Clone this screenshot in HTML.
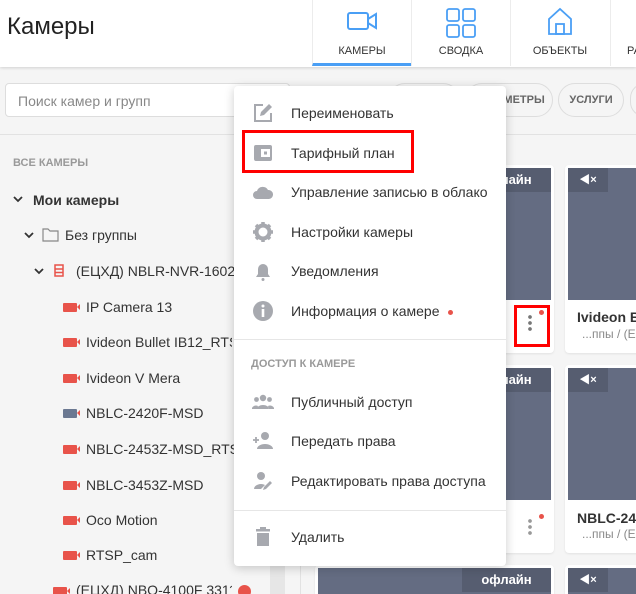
<!DOCTYPE html>
<html><head><meta charset="utf-8">
<style>
*{box-sizing:border-box;margin:0;padding:0}
html,body{width:636px;height:594px;overflow:hidden}
body{background:#f5f5f5;font-family:"Liberation Sans","Noto Sans CJK SC",sans-serif;position:relative;color:#333}
.abs{position:absolute}
.hdr{left:0;top:0;width:636px;height:67px;background:#fff;box-shadow:0 1px 3px rgba(0,0,0,.15)}
.tab{top:0;height:66px;width:99px;border-left:1px solid #ececec;text-align:center;font-size:11px;color:#333}
.tab span{position:absolute;left:0;right:0;top:45px}
.chip{top:83px;height:34px;border:1px solid #ddd;border-radius:17px;font-size:11px;font-weight:bold;color:#666;line-height:32px;text-align:center}
.tree{font-size:14px;color:#333;white-space:nowrap}
.cam{width:14px;height:9px;background:#e8534a;border-radius:1px}
.cam:after{content:"";position:absolute;right:-3px;top:1px;border:3.5px solid transparent;border-right:3px solid #e8534a;}
.card{background:#fff;border-radius:4px;box-shadow:0 1px 2px rgba(0,0,0,.08)}
.img{background:#646c82}
.badge{background:#565d70;color:#fff;font-size:13px;font-weight:bold;text-align:center;line-height:24px}
.menu{left:234px;top:86px;width:272px;height:480px;background:#fff;border-radius:4px;box-shadow:0 2px 10px rgba(0,0,0,.2)}
.mi{position:absolute;left:57px;font-size:14px;color:#333;white-space:nowrap}
.ic{position:absolute;left:18px;width:22px;height:22px}
.nm{white-space:nowrap;overflow:hidden}
</style></head><body>
<div class="abs hdr"></div>
<div class="abs" style="left:7px;top:13px;font-size:24px;color:#222">Камеры</div>
<div class="abs tab" style="left:312px;border-bottom:3px solid #4a9ff5">
<svg class="abs" style="left:34px;top:10px" width="32" height="22" viewBox="0 0 32 22"><rect x="1" y="3" width="20" height="16" rx="2" fill="none" stroke="#4a9ff5" stroke-width="2"/><path d="M21 9l8-5v14l-8-5" fill="none" stroke="#4a9ff5" stroke-width="2"/></svg><span>КАМЕРЫ</span></div>
<div class="abs tab" style="left:411px"><svg class="abs" style="left:34px;top:8px" width="30" height="30" viewBox="0 0 30 30" fill="none" stroke="#4a9ff5" stroke-width="1.8"><rect x="1" y="1" width="12" height="12" rx="2"/><rect x="17" y="1" width="12" height="12" rx="2"/><rect x="1" y="17" width="12" height="12" rx="2"/><rect x="17" y="17" width="12" height="12" rx="2"/></svg><span>СВОДКА</span></div>
<div class="abs tab" style="left:510px"><svg class="abs" style="left:36px;top:7px" width="26" height="28" viewBox="0 0 26 28" fill="none" stroke="#4a9ff5" stroke-width="1.8"><path d="M2 12L13 2l11 10v15H2z"/><rect x="9" y="17" width="8" height="10"/></svg><span>ОБЪЕКТЫ</span></div>
<div class="abs tab" style="left:610px;text-align:left"><span style="left:16px">РА</span></div>

<div class="abs" style="left:5px;top:83px;width:285px;height:34px;background:#fff;border:1px solid #ddd;border-radius:4px;font-size:14px;color:#888;padding:9px 12px">Поиск камер и групп</div>
<div class="abs chip" style="left:388px;width:72px"></div>
<div class="abs chip" style="left:465px;width:88px">ПАРАМЕТРЫ</div>
<div class="abs chip" style="left:558px;width:66px">УСЛУГИ</div>
<div class="abs chip" style="left:630px;width:30px"></div>
<div class="abs" style="left:0;top:134px;width:636px;height:1px;background:#e2e2e2"></div>
<div class="abs" style="left:270px;top:560px;width:15px;height:34px;background:#e6e6e6"></div>
<div class="abs" style="left:300px;top:540px;width:1px;height:54px;background:#e2e2e2"></div>

<div class="abs" style="left:13px;top:157px;font-size:11px;font-weight:bold;color:#999">ВСЕ КАМЕРЫ</div>
<svg class="abs" style="left:13px;top:195px" width="10" height="8"><path d="M1 2l4 4 4-4" fill="none" stroke="#333" stroke-width="1.8"/></svg>
<div class="abs tree" style="left:33px;top:192px;font-weight:bold">Мои камеры</div>
<svg class="abs" style="left:24px;top:231px" width="10" height="8"><path d="M1 2l4 4 4-4" fill="none" stroke="#333" stroke-width="1.8"/></svg>
<svg class="abs" style="left:42px;top:228px" width="17" height="14"><path d="M1 1h5l2 2h8v10H1z" fill="none" stroke="#888" stroke-width="1.2"/></svg>
<div class="abs tree" style="left:65px;top:227px">Без группы</div>
<svg class="abs" style="left:34px;top:267px" width="10" height="8"><path d="M1 2l4 4 4-4" fill="none" stroke="#333" stroke-width="1.8"/></svg>
<svg class="abs" style="left:54px;top:264px" width="10" height="13"><rect x="1" y="1" width="8" height="11" fill="none" stroke="#e8534a" stroke-width="1.5"/><path d="M1 5h8M1 8.5h8" stroke="#e8534a" stroke-width="1.5"/></svg>
<div class="abs tree" style="left:76px;top:263px;width:186px;overflow:hidden">(ЕЦХД) NBLR-NVR-1602L</div>
<div class="abs cam" style="left:63px;top:303px"></div><div class="abs tree" style="left:86px;top:299px">IP Camera 13</div>
<div class="abs cam" style="left:63px;top:338px"></div><div class="abs tree" style="left:86px;top:334px;width:146px;overflow:hidden">Ivideon Bullet IB12_RTSP</div>
<div class="abs cam" style="left:63px;top:374px"></div><div class="abs tree" style="left:86px;top:370px">Ivideon V Mera</div>
<div class="abs cam" style="left:63px;top:409px;background:#6b7891"></div><div class="abs tree" style="left:86px;top:405px">NBLC-2420F-MSD</div>
<div class="abs cam" style="left:63px;top:445px"></div><div class="abs tree" style="left:86px;top:441px;width:148px;overflow:hidden">NBLC-2453Z-MSD_RTSP</div>
<div class="abs cam" style="left:63px;top:481px"></div><div class="abs tree" style="left:86px;top:477px">NBLC-3453Z-MSD</div>
<div class="abs cam" style="left:63px;top:516px"></div><div class="abs tree" style="left:86px;top:512px">Oco Motion</div>
<div class="abs cam" style="left:63px;top:551px"></div><div class="abs tree" style="left:86px;top:547px">RTSP_cam</div>
<div class="abs cam" style="left:53px;top:587px"></div><div class="abs tree" style="left:76px;top:582px;width:156px;overflow:hidden">(ЕЦХД) NBO-4100F 3311</div>
<div class="abs" style="left:238px;top:585px;width:13px;height:13px;border-radius:50%;background:#e8534a"></div>

<!-- cards -->
<div class="abs card" style="left:315px;top:165px;width:239px;height:188px"></div>
<div class="abs img" style="left:318px;top:168px;width:233px;height:132px"></div>
<div class="abs badge" style="left:462px;top:168px;width:89px">офлайн</div>
<div class="abs card" style="left:565px;top:165px;width:80px;height:188px"></div>
<div class="abs img" style="left:568px;top:168px;width:80px;height:132px"></div>
<div class="abs badge" style="left:568px;top:168px;width:40px;font-size:11px">◀×</div>
<div class="abs nm" style="left:577px;top:309px;width:59px;font-size:14px;font-weight:bold;color:#333">Ivideon Bullet</div>
<div class="abs nm" style="left:582px;top:327px;width:54px;font-size:12px;color:#888">...ппы / (Е</div>
<div class="abs" style="left:528px;top:314px;width:4px;height:18px;background:radial-gradient(circle,#777 1.7px,transparent 2px) 0 0/4px 6px"></div>
<div class="abs" style="left:539px;top:310px;width:5px;height:5px;border-radius:50%;background:#e8534a"></div>
<div class="abs" style="left:514px;top:305px;width:36px;height:42px;border:3px solid #f00"></div>

<div class="abs card" style="left:315px;top:365px;width:239px;height:188px"></div>
<div class="abs img" style="left:318px;top:368px;width:233px;height:132px"></div>
<div class="abs badge" style="left:462px;top:368px;width:89px">офлайн</div>
<div class="abs card" style="left:565px;top:365px;width:80px;height:188px"></div>
<div class="abs img" style="left:568px;top:368px;width:80px;height:132px"></div>
<div class="abs badge" style="left:568px;top:368px;width:40px;font-size:11px">◀×</div>
<div class="abs nm" style="left:577px;top:510px;width:59px;font-size:14px;font-weight:bold;color:#333">NBLC-2453</div>
<div class="abs nm" style="left:582px;top:527px;width:54px;font-size:12px;color:#888">...ппы / (Е</div>
<div class="abs" style="left:528px;top:518px;width:4px;height:18px;background:radial-gradient(circle,#999 1.7px,transparent 2px) 0 0/4px 6px"></div>
<div class="abs" style="left:539px;top:514px;width:5px;height:5px;border-radius:50%;background:#e8534a"></div>

<div class="abs card" style="left:315px;top:565px;width:239px;height:40px"></div>
<div class="abs img" style="left:318px;top:568px;width:233px;height:40px"></div>
<div class="abs badge" style="left:462px;top:568px;width:89px">офлайн</div>
<div class="abs card" style="left:565px;top:565px;width:80px;height:40px"></div>
<div class="abs img" style="left:568px;top:568px;width:80px;height:40px"></div>
<div class="abs badge" style="left:568px;top:568px;width:40px;font-size:11px">◀×</div>

<!-- menu -->
<div class="abs menu">
<svg class="ic" style="top:16px" viewBox="0 0 22 22"><path d="M11 3H3v16h16v-8" fill="none" stroke="#a7a9af" stroke-width="2"/><path d="M8 14l1-4 8-8 3 3-8 8z" fill="#a7a9af"/></svg>
<div class="mi" style="top:19px">Переименовать</div>
<svg class="ic" style="top:56px" viewBox="0 0 22 22"><rect x="2" y="3" width="18" height="16" rx="2" fill="#a7a9af"/><rect x="9" y="7" width="9" height="8" fill="#fff"/><rect x="12" y="9.5" width="3" height="3" fill="#a7a9af"/></svg>
<div class="mi" style="top:59px">Тарифный план</div>
<svg class="ic" style="top:95px" viewBox="0 0 22 22"><path d="M5 18a4 4 0 010-8 6 6 0 0111-1 4.5 4.5 0 011 9z" fill="#a7a9af"/></svg>
<div class="mi" style="top:98px">Управление записью в облако</div>
<svg class="ic" style="top:135px" viewBox="0 0 22 22"><circle cx="11" cy="11" r="6.5" fill="none" stroke="#a7a9af" stroke-width="4"/><path d="M11 1v5M11 16v5M1 11h5M16 11h5M4 4l3.5 3.5M14.5 14.5L18 18M18 4l-3.5 3.5M7.5 14.5L4 18" stroke="#a7a9af" stroke-width="3.5"/></svg>
<div class="mi" style="top:138px">Настройки камеры</div>
<svg class="ic" style="top:174px" viewBox="0 0 22 22"><path d="M4 17h14l-2-3V9a5 5 0 00-10 0v5z" fill="#a7a9af"/><circle cx="11" cy="19.5" r="1.5" fill="#a7a9af"/></svg>
<div class="mi" style="top:177px">Уведомления</div>
<svg class="ic" style="top:214px" viewBox="0 0 22 22"><circle cx="11" cy="11" r="10" fill="#a7a9af"/><rect x="9.7" y="9" width="2.6" height="8" fill="#fff"/><circle cx="11" cy="6" r="1.5" fill="#fff"/></svg>
<div class="mi" style="top:217px">Информация о камере <span style="display:inline-block;width:5px;height:5px;border-radius:50%;background:#e8534a;vertical-align:middle;margin-left:5px"></span></div>
<div class="abs" style="left:0;top:253px;width:272px;height:1px;background:#e6e6e6"></div>
<div class="mi" style="left:17px;top:272px;font-size:11px;font-weight:bold;color:#999">ДОСТУП К КАМЕРЕ</div>
<svg class="ic" style="top:305px" viewBox="0 0 22 22"><circle cx="11" cy="7" r="3.2" fill="#a7a9af"/><circle cx="4.5" cy="8.5" r="2.4" fill="#a7a9af"/><circle cx="17.5" cy="8.5" r="2.4" fill="#a7a9af"/><path d="M5 18a6 4 0 0112 0zM0 18a4 3 0 016-3l-1 3zM22 18a4 3 0 00-6-3l1 3z" fill="#a7a9af"/></svg>
<div class="mi" style="top:308px">Публичный доступ</div>
<svg class="ic" style="top:344px" viewBox="0 0 22 22"><circle cx="13" cy="6" r="4" fill="#a7a9af"/><path d="M5 19a8 5 0 0116 0z" fill="#a7a9af"/><path d="M1 10h6M4 7v6" stroke="#a7a9af" stroke-width="1.8"/></svg>
<div class="mi" style="top:347px">Передать права</div>
<svg class="ic" style="top:384px" viewBox="0 0 22 22"><circle cx="9" cy="6" r="4" fill="#a7a9af"/><path d="M2 19a7 5 0 0111-4l-4 4z" fill="#a7a9af"/><path d="M11 20l1-3 6-6 2 2-6 6z" fill="#a7a9af"/></svg>
<div class="mi" style="top:387px">Редактировать права доступа</div>
<div class="abs" style="left:0;top:424px;width:272px;height:1px;background:#e6e6e6"></div>
<svg class="ic" style="top:440px" viewBox="0 0 22 22"><rect x="4" y="3" width="14" height="2.5" fill="#a7a9af"/><rect x="8" y="1" width="6" height="2" fill="#a7a9af"/><path d="M5 7h12v13H5z" fill="#a7a9af"/></svg>
<div class="mi" style="top:443px">Удалить</div>
</div>
<div class="abs" style="left:242px;top:130px;width:172px;height:43px;border:3px solid #f00"></div>
</body></html>
